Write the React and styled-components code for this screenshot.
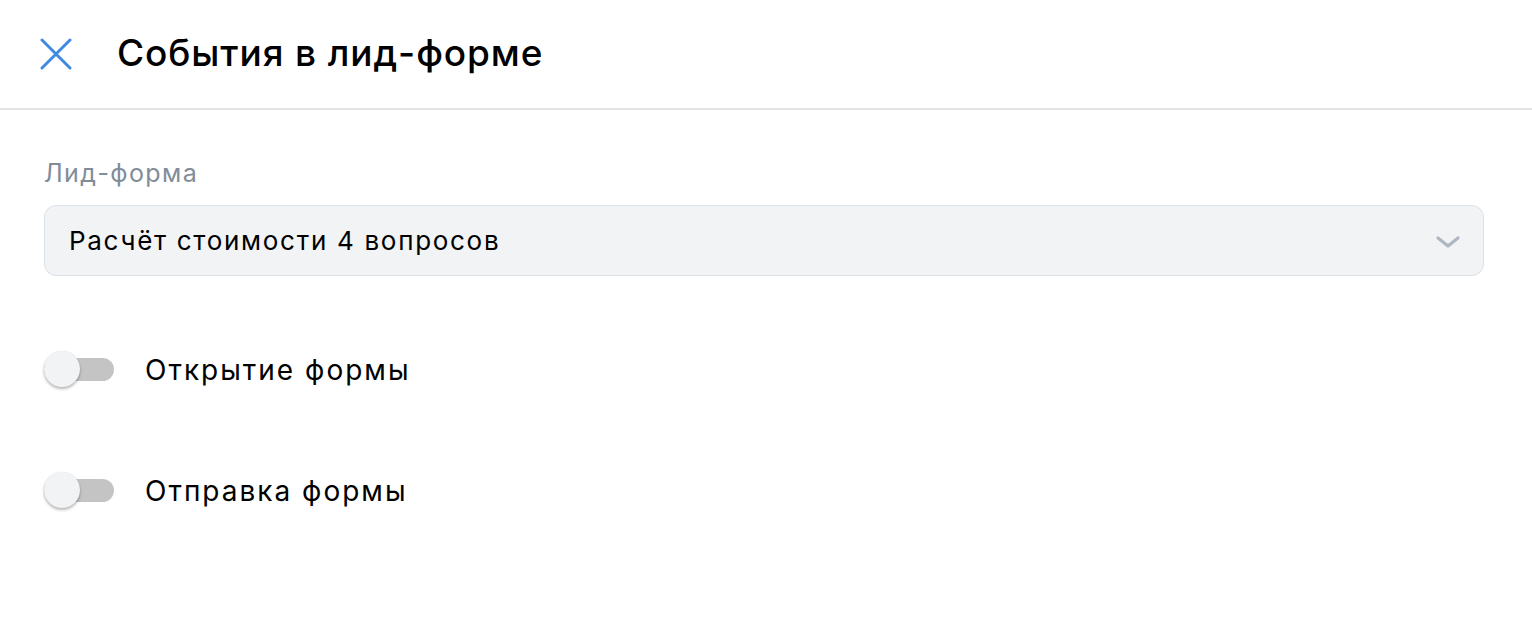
import React from "react";
import styled, { createGlobalStyle } from "styled-components";

const GlobalStyle = createGlobalStyle`
  html, body {
    margin: 0;
    padding: 0;
    background: #ffffff;
    font-family: Inter, "Noto Sans", sans-serif;
    color: #000000;
  }
`;

const Root = styled.div`
  width: 100%;
  min-height: 628px;
  background: #ffffff;
`;

const Header = styled.div`
  display: flex;
  align-items: center;
  height: 104px;
  padding: 0 40px 4px;
  border-bottom: 2px solid #e3e3e3;
  box-sizing: content-box;
`;

const CloseButton = styled.button`
  display: flex;
  align-items: center;
  justify-content: center;
  width: 32px;
  height: 32px;
  padding: 0;
  margin: 4px 45px 0 0;
  border: none;
  background: none;
  cursor: pointer;
`;

const Title = styled.h1`
  margin: 0;
  font-size: 37px;
  font-weight: 500;
  letter-spacing: 0.9px;
`;

const Body = styled.div`
  display: flex;
  flex-direction: column;
  padding: 48px 48px 0 44px;
`;

const Label = styled.div`
  font-size: 25px;
  color: #818c99;
  line-height: 30px;
  letter-spacing: 1.4px;
  margin-bottom: 17px;
`;

const Select = styled.div`
  display: flex;
  align-items: center;
  justify-content: space-between;
  height: 69px;
  padding: 0 22px 0 24px;
  background: #f2f3f5;
  border: 1px solid #dce1e6;
  border-radius: 12px;
  font-size: 26px;
  letter-spacing: 1.7px;

  svg {
    margin-top: 3px;
  }
`;

const ToggleList = styled.div`
  display: flex;
  flex-direction: column;
  gap: 84px;
  margin-top: 75px;
`;

const ToggleRow = styled.label`
  display: flex;
  align-items: center;
  gap: 31px;
  height: 37px;
  font-size: 28px;
  letter-spacing: 2px;
`;

const Track = styled.span`
  position: relative;
  display: block;
  width: 70px;
  height: 23px;
  border-radius: 12px;
  background: ${(p) => (p.$on ? "#3f8ae0" : "#c4c4c4")};
`;

const Knob = styled.span`
  position: absolute;
  top: -7px;
  left: ${(p) => (p.$on ? "34px" : "0")};
  width: 36px;
  height: 36px;
  border-radius: 50%;
  background: #f2f3f5;
  box-shadow: 0 2px 3px rgba(0, 0, 0, 0.28), 0 0 1px rgba(0, 0, 0, 0.12);
`;

const Toggle = ({ on, children }) => (
  <ToggleRow>
    <Track $on={on}>
      <Knob $on={on} />
    </Track>
    {children}
  </ToggleRow>
);

export default function App() {
  return (
    <Root>
      <GlobalStyle />
      <Header>
        <CloseButton aria-label="Закрыть">
          <svg width="32" height="32" viewBox="0 0 32 32">
            <path
              d="M2 2 L30 30 M30 2 L2 30"
              stroke="#3f8ae0"
              strokeWidth="3"
              strokeLinecap="round"
            />
          </svg>
        </CloseButton>
        <Title>События в лид-форме</Title>
      </Header>
      <Body>
        <Label>Лид-форма</Label>
        <Select>
          <span>Расчёт стоимости 4 вопросов</span>
          <svg width="26" height="14" viewBox="0 0 26 14">
            <path
              d="M3 3 L13 11 L23 3"
              fill="none"
              stroke="#aeb7c2"
              strokeWidth="3.2"
              strokeLinecap="round"
              strokeLinejoin="round"
            />
          </svg>
        </Select>
        <ToggleList>
          <Toggle>Открытие формы</Toggle>
          <Toggle>Отправка формы</Toggle>
        </ToggleList>
      </Body>
    </Root>
  );
}
